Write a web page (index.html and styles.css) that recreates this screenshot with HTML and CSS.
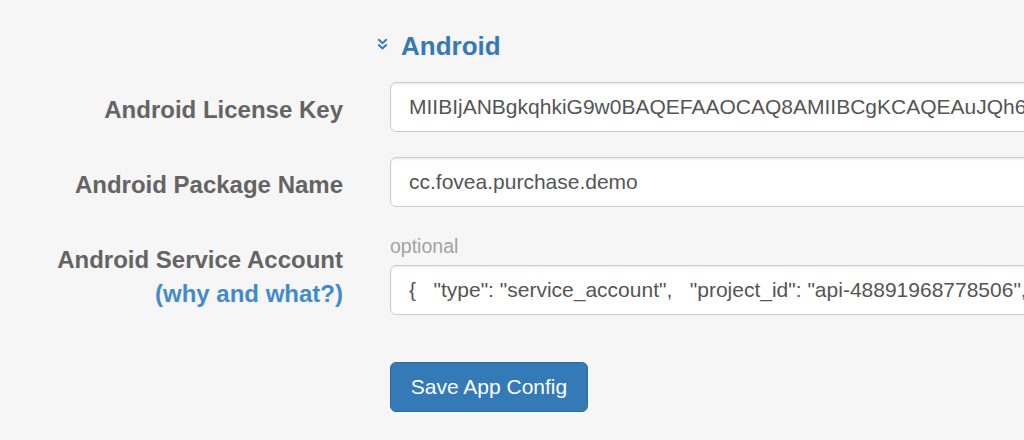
FILE: index.html
```html
<!DOCTYPE html>
<html>
<head>
<meta charset="utf-8">
<link rel="stylesheet" href="styles.css">
</head>
<body>
<div class="page">
  <div class="form">
    <div class="label-col"></div>
    <h4 class="heading"><svg class="chev" width="11" height="12" viewBox="0 0 11 12"><polyline points="1.3,1.3 5.5,5.2 9.7,1.3" /><polyline points="1.3,6.5 5.5,10.4 9.7,6.5" /></svg>Android</h4>

    <label class="label-col">Android License Key</label>
    <div class="field"><div class="input">MIIBIjANBgkqhkiG9w0BAQEFAAOCAQ8AMIIBCgKCAQEAuJQh6nU0Bq3tK2X8</div></div>

    <label class="label-col">Android Package Name</label>
    <div class="field"><div class="input">cc.fovea.purchase.demo</div></div>

    <label class="label-col">Android Service Account<br><a class="why" href="#">(why and what?)</a></label>
    <div class="field">
      <div class="help">optional</div>
      <div class="input pre">{   "type": "service_account",   "project_id": "api-48891968778506",   "private_key_id": "a1b2"</div>
    </div>

    <div class="label-col"></div>
    <div class="field actions"><button class="btn">Save App Config</button></div>
  </div>
</div>
</body>
</html>
```
FILE: styles.css
```css
html, body {
  margin: 0;
  padding: 0;
  background: #f6f6f6;
  overflow: hidden;
  font-family: "Liberation Sans", Arial, Helvetica, sans-serif;
}
.page {
  padding-top: 32px;
  width: 1400px;
}
.form {
  display: grid;
  grid-template-columns: 343px 700px;
  column-gap: 47px;
  align-items: start;
}
.heading {
  margin: 0 0 21px -13px;
  font-size: 26px;
  line-height: 29px;
  font-weight: bold;
  color: #337ab7;
  display: flex;
  align-items: center;
}
.chev {
  width: 11px;
  height: 12px;
  margin-right: 13px;
  margin-top: -6px;
}
.chev polyline {
  fill: none;
  stroke: #337ab7;
  stroke-width: 2;
}
.label-col {
  text-align: right;
  font-size: 24px;
  font-weight: bold;
  line-height: 34px;
  padding-top: 10.7px;
  color: #646464;
  margin-bottom: 25px;
}
.why {
  color: #428bca;
  text-decoration: none;
}
.field {
  margin-bottom: 25px;
}
.input {
  box-sizing: border-box;
  height: 50px;
  padding: 9px 18px;
  font-size: 21px;
  line-height: 30px;
  color: #555;
  background: #fff;
  border: 1px solid #ccc;
  border-radius: 6px;
  box-shadow: inset 0 1.5px 1.5px rgba(0,0,0,0.075);
  white-space: nowrap;
  overflow: hidden;
}
.pre {
  white-space: pre;
}
.help {
  font-size: 19.5px;
  line-height: 28px;
  color: #a3a3a3;
  margin-bottom: 5px;
}
.actions {
  margin-top: 22px;
}
.btn {
  box-sizing: border-box;
  height: 50px;
  width: 198px;
  padding: 9px 19px;
  font-family: "Liberation Sans", Arial, Helvetica, sans-serif;
  font-size: 21px;
  line-height: 30px;
  color: #fff;
  background: #337ab7;
  border: 1px solid #2e6da4;
  border-radius: 6px;
}
```
